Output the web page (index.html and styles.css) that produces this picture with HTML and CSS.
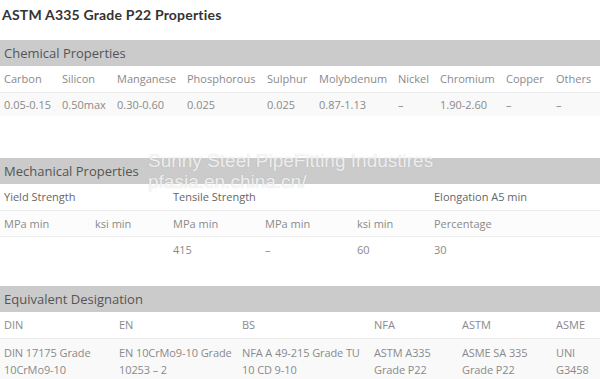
FILE: index.html
```html
<!DOCTYPE html>
<html>
<head>
<meta charset="utf-8">
<link rel="stylesheet" href="styles.css">
</head>
<body>
<div class="page">
  <h1 class="title">ASTM A335 Grade P22 Properties</h1>

  <table class="tbl chem">
    <colgroup>
      <col class="c58"><col class="c55"><col class="c70"><col class="c80"><col class="c52"><col class="c79"><col class="c42"><col class="c66"><col class="c50"><col class="c48">
    </colgroup>
    <tr class="cap"><th colspan="10">Chemical Properties</th></tr>
    <tr class="head"><td>Carbon</td><td>Silicon</td><td>Manganese</td><td>Phosphorous</td><td>Sulphur</td><td>Molybdenum</td><td>Nickel</td><td>Chromium</td><td>Copper</td><td>Others</td></tr>
    <tr class="alt"><td>0.05-0.15</td><td>0.50max</td><td>0.30-0.60</td><td>0.025</td><td>0.025</td><td>0.87-1.13</td><td>–</td><td>1.90-2.60</td><td>–</td><td>–</td></tr>
  </table>

  <table class="tbl mech">
    <colgroup>
      <col class="c91"><col class="c78"><col class="c92"><col class="c92"><col class="c77"><col class="c170">
    </colgroup>
    <tr class="cap"><th colspan="6">Mechanical Properties</th></tr>
    <tr class="head dark"><td colspan="2">Yield Strength</td><td colspan="3">Tensile Strength</td><td>Elongation A5 min</td></tr>
    <tr class="head alt"><td>MPa min</td><td>ksi min</td><td>MPa min</td><td>MPa min</td><td>ksi min</td><td>Percentage</td></tr>
    <tr><td></td><td></td><td>415</td><td>–</td><td>60</td><td>30</td></tr>
  </table>

  <table class="tbl equiv">
    <colgroup>
      <col class="c115"><col class="c123"><col class="c132"><col class="c88"><col class="c94"><col class="c48">
    </colgroup>
    <tr class="cap"><th colspan="6">Equivalent Designation</th></tr>
    <tr class="head"><td>DIN</td><td>EN</td><td>BS</td><td>NFA</td><td>ASTM</td><td>ASME</td></tr>
    <tr class="alt multi"><td>DIN 17175 Grade 10CrMo9-10</td><td>EN 10CrMo9-10 Grade 10253 – 2</td><td>NFA A 49-215 Grade TU 10 CD 9-10</td><td>ASTM A335 Grade P22</td><td>ASME SA 335 Grade P22</td><td>UNI G3458</td></tr>
  </table>

  <div class="watermark">
    <div>Sunny Steel PipeFitting Industires</div>
    <div>pfasia.en.china.cn/</div>
  </div>
</div>
</body>
</html>
```

FILE: styles.css
```css
html, body {
  margin: 0;
  padding: 0;
  background: #fff;
}
.page {
  position: relative;
  width: 600px;
  height: 379px;
  overflow: hidden;
  font-family: "Open Sans", "Liberation Sans", sans-serif;
}
.title {
  margin: 0;
  padding: 6px 0 0 2px;
  height: 34px;
  box-sizing: border-box;
  font-family: "Lato", "Noto Sans", sans-serif;
  font-weight: 700;
  font-size: 14px;
  letter-spacing: 0.2px;
  color: #333;
  line-height: 18px;
}
.c42 { width: 42px; }
.c48 { width: 48px; }
.c50 { width: 50px; }
.c52 { width: 52px; }
.c55 { width: 55px; }
.c58 { width: 58px; }
.c66 { width: 66px; }
.c70 { width: 70px; }
.c77 { width: 77px; }
.c78 { width: 78px; }
.c79 { width: 79px; }
.c80 { width: 80px; }
.c88 { width: 88px; }
.c91 { width: 91px; }
.c92 { width: 92px; }
.c94 { width: 94px; }
.c115 { width: 115px; }
.c123 { width: 123px; }
.c132 { width: 132px; }
.c170 { width: 170px; }
.tbl {
  width: 600px;
  border-collapse: collapse;
  table-layout: fixed;
}
.tbl td, .tbl th {
  padding: 0 0 0 4px;
  text-align: left;
  vertical-align: middle;
  font-size: 11px;
  font-weight: 400;
  color: #8a8a8a;
  white-space: nowrap;
  overflow: hidden;
}
.tbl tr {
  height: 26px;
}
.tbl tr.cap th {
  background: #cbcbcb;
  color: #555;
  font-size: 13px;
  height: 26px;
}
.tbl tr.head td {
  border-bottom: 1px solid #ececec;
}
.tbl tr.head.dark td {
  color: #666;
}
.tbl tr.alt td {
  background: #f9f9f9;
}
.chem { margin-top: 6px; }
.chem tr:last-child { height: 24px; }
.mech { margin-top: 42px; }
.mech tr.head.alt td { background: #fcfcfc; }
.equiv { margin-top: 24px; }
.equiv tr.multi td {
  white-space: normal;
  line-height: 17px;
  padding-top: 5px;
  padding-bottom: 4px;
  padding-right: 0;
  vertical-align: top;
  letter-spacing: -0.1px;
}
.watermark {
  position: absolute;
  left: 148px;
  top: 150px;
  font-family: "Liberation Sans", Arial, sans-serif;
  font-size: 19px;
  line-height: 21px;
  color: rgba(255, 255, 255, 0.8);
  text-shadow: 0 0 1px rgba(120, 120, 120, 0.35);
  pointer-events: none;
}
```
